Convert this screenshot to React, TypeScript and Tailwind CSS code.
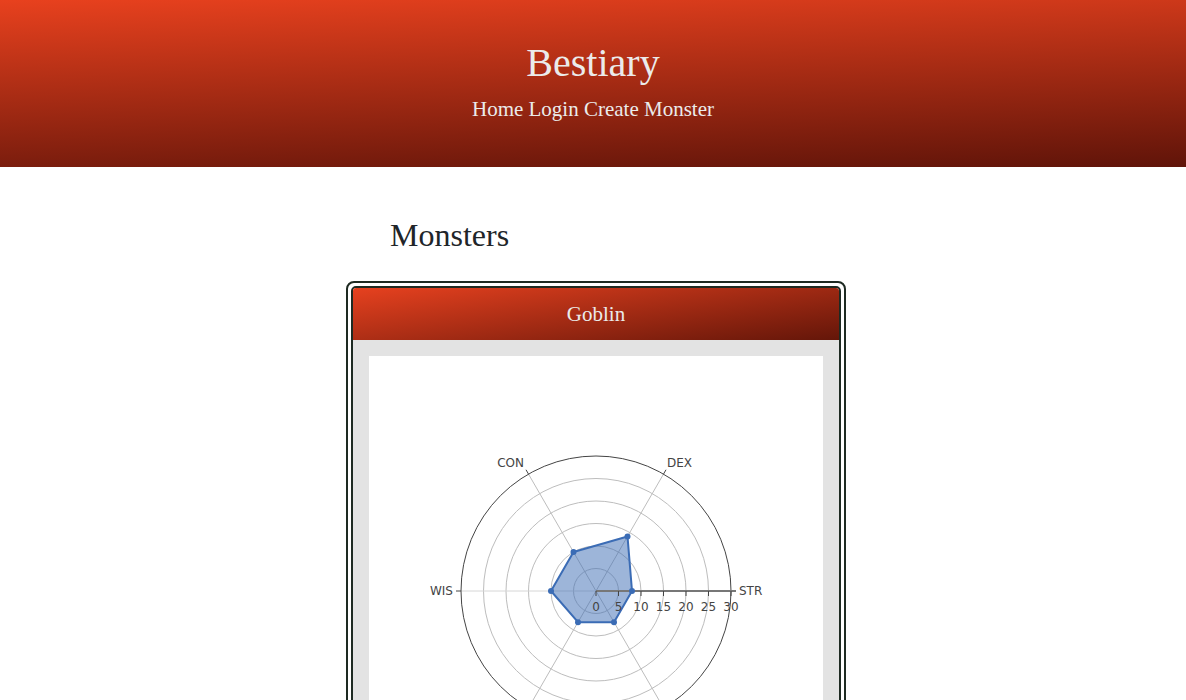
import React from 'react';

const CX = 227;
const CY = 235;
const R = 135;
const MAX = 30;

const stats = [
  { label: 'STR', value: 8, angle: 0 },
  { label: 'DEX', value: 14, angle: 60 },
  { label: 'CON', value: 10, angle: 120 },
  { label: 'WIS', value: 10, angle: 180 },
  { label: 'INT', value: 8, angle: 240 },
  { label: 'CHA', value: 8, angle: 300 },
];

const pt = (angle: number, r: number) => {
  const a = (angle * Math.PI) / 180;
  return { x: CX + r * Math.cos(a), y: CY - r * Math.sin(a) };
};

// label placement, picked by hand to sit like plotly's (lower two fall below the fold)
const labelPos: Record<string, { x: number; y: number; anchor: 'start' | 'end' }> = {
  STR: { x: 370, y: 239, anchor: 'start' },
  DEX: { x: 298, y: 111, anchor: 'start' },
  CON: { x: 155, y: 111, anchor: 'end' },
  WIS: { x: 84, y: 239, anchor: 'end' },
};

const RadarChart: React.FC = () => {
  const points = stats.map((s) => pt(s.angle, (s.value / MAX) * R));
  const poly = points.map((p) => `${p.x},${p.y}`).join(' ');
  const font = "'DejaVu Sans', Verdana, sans-serif";

  return (
    <svg width={454} height={450} viewBox="0 0 454 450" className="block">
      {/* grid circles */}
      {[1, 2, 3, 4, 5].map((i) => (
        <circle key={i} cx={CX} cy={CY} r={(R / 6) * i} fill="none" stroke="#bdbdbd" strokeWidth={1} />
      ))}
      {/* angular grid lines */}
      {stats.map((s) => {
        const end = pt(s.angle, R);
        return (
          <line
            key={s.label}
            x1={CX}
            y1={CY}
            x2={end.x}
            y2={end.y}
            stroke={s.angle === 180 ? '#d6d6d6' : '#bdbdbd'}
            strokeWidth={1}
          />
        );
      })}
      {/* outer circle */}
      <circle cx={CX} cy={CY} r={R} fill="none" stroke="#444" strokeWidth={1} />
      {/* angular ticks */}
      {stats.map((s) => {
        const a = pt(s.angle, R);
        const b = pt(s.angle, R + 5);
        return <line key={'t' + s.label} x1={a.x} y1={a.y} x2={b.x} y2={b.y} stroke="#444" strokeWidth={1} />;
      })}
      {/* data */}
      <polygon points={poly} fill="rgba(59,108,180,0.5)" stroke="#3b6cb5" strokeWidth={2} strokeLinejoin="round" />
      {/* radial axis */}
      <line x1={CX} y1={CY} x2={CX + R + 5} y2={CY} stroke="#777" strokeWidth={2} />
      {[0, 5, 10, 15, 20, 25, 30].map((v) => {
        const x = CX + (v / MAX) * R;
        return (
          <g key={v}>
            <line x1={x} y1={CY} x2={x} y2={CY + 5} stroke="#444" strokeWidth={1} />
            <text x={x} y={CY + 20} textAnchor="middle" fontSize={12} fill="#444" fontFamily={font}>
              {v}
            </text>
          </g>
        );
      })}
      {points.map((p, i) => (
        <circle key={'m' + i} cx={p.x} cy={p.y} r={3} fill="#3b6cb5" />
      ))}
      {/* angular labels */}
      {Object.entries(labelPos).map(([label, l]) => (
        <text key={'l' + label} x={l.x} y={l.y} textAnchor={l.anchor} fontSize={12} fill="#444" fontFamily={font}>
          {label}
        </text>
      ))}
    </svg>
  );
};

export default function App() {
  return (
    <div className="min-h-screen bg-white font-['Liberation_Serif','Times_New_Roman',serif]">
      <header className="h-[167px] pt-[40px] flex flex-col items-center text-[#ebebeb] bg-[linear-gradient(178deg,#e8411e,#601409)]">
        <h1 className="text-[40px] leading-[46px]">Bestiary</h1>
        <nav className="mt-[11px] text-[21px] leading-[24px]">
          <a href="#">Home</a> <a href="#">Login</a> <a href="#">Create Monster</a>
        </nav>
      </header>

      <main className="pb-10">
        <h2 className="ml-[390px] mt-[50px] text-[32px] leading-[37px] text-[#212529]">Monsters</h2>

        <div className="ml-[346px] mt-[27px] w-[500px] rounded-[8px] border-2 border-[#1e2a22] p-[3px] bg-white">
          <div className="rounded-[5px] border-2 border-[#1e2a22] overflow-hidden">
            <div className="py-[14px] text-center text-[21px] leading-[24px] text-[#ebebeb] bg-[linear-gradient(172deg,#e6411f,#641609)]">
              Goblin
            </div>
            <div className="bg-[#e3e3e3] p-4">
              <div className="bg-white">
                <RadarChart />
              </div>
            </div>
          </div>
        </div>
      </main>
    </div>
  );
}
